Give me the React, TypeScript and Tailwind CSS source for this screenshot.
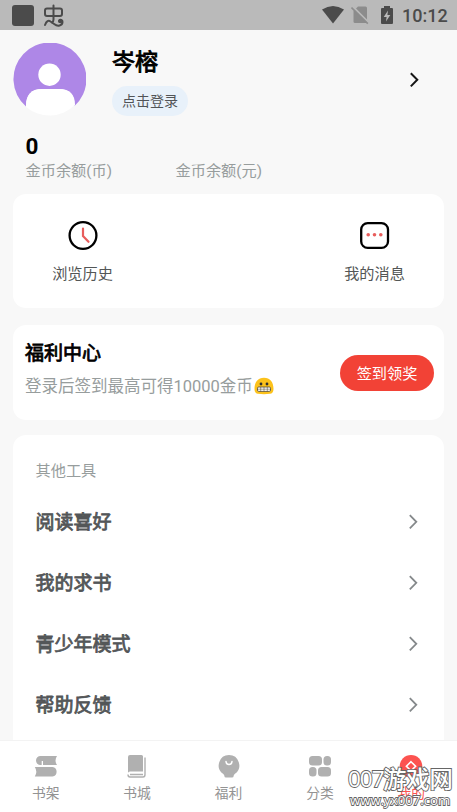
import React from 'react';

const Chevron = ({ className }: { className: string }) => (
  <svg width="20" height="20" viewBox="0 0 20 20" fill="none" stroke="currentColor" className={className}>
    <path d="M6.8 3.2 L13.3 9.8 L6.8 16.4" />
  </svg>
);

function StatusBar() {
  return (
    <header className="flex h-[30px] shrink-0 items-center bg-[#bababa] text-[#4b4b4b]">
      <div className="ml-3 h-[21px] w-[22px] rounded-[3px] bg-[#4b4b4b]" />
      <svg className="ml-[8px]" width="22" height="24" viewBox="0 0 22 24" fill="none" stroke="currentColor" strokeWidth="2" strokeLinecap="round">
        <rect x="3" y="5.5" width="17" height="7.5" rx="2" />
        <path d="M11.5 2.6 V16.5 Q11.5 18.5 10 19.5" />
        <path d="M3 22 C4.5 18 6.5 17 8.5 18.5 L12.5 21.3 C15.5 23.7 20.5 22.8 20.5 19 C20.5 15.8 16 16.5 17.3 18.8" />
        <circle cx="18.4" cy="18.3" r="1" />
      </svg>
      <svg className="ml-auto" width="24" height="20" viewBox="0 0 24 20" fill="currentColor">
        <path d="M1 4.6 Q12 -2.8 23 4.6 L12 18.4 Z" />
      </svg>
      <svg className="ml-[6px]" width="18" height="20" viewBox="0 0 18 20">
        <path d="M7 1.5 H14.5 Q16 1.5 16 3 V18 H4 Q2.5 18 2.5 16.5 V6 Z" fill="#8c8c8c" />
        <path d="M1.6 1.5 L18 18" stroke="#bababa" strokeWidth="2" />
        <path d="M0.5 2.5 L16.8 18.6" stroke="#8c8c8c" strokeWidth="1.6" />
      </svg>
      <svg className="ml-[11px]" width="14" height="20" viewBox="0 0 14 20">
        <path d="M4 1 H10 V3 H12 Q13 3 13 4 V18 Q13 19 12 19 H2 Q1 19 1 18 V4 Q1 3 2 3 H4 Z" fill="currentColor" />
        <path d="M8 5.5 L3.7 12 H6.6 L6 16.5 L10.3 10 H7.4 Z" fill="#bababa" />
      </svg>
      <span className="mr-[10px] ml-[8px] w-[45px] pt-px font-['Roboto',sans-serif] text-[18px] leading-[29px] font-medium whitespace-nowrap">10:12</span>
    </header>
  );
}

function Profile() {
  return (
    <section className="flex h-[104px] shrink-0 items-start pl-[13px]">
      <svg className="mt-[13px]" width="73" height="73" viewBox="0 0 73 73">
        <path d="M13 63.5 A36.5 36.5 0 1 1 61.5 63 Q62 46 46 46 H29 Q13 46 13 63.5 Z" fill="#ae87e7" />
        <circle cx="36.5" cy="31.7" r="11.2" fill="#fff" />
        <path d="M13 62.5 Q13 46 29 46 H46 Q62 46 62 62 A36.5 36.5 0 0 1 13 64 Z" fill="#fff" />
      </svg>
      <div className="ml-[26px] flex flex-col items-start pt-[17px]">
        <h1 className="text-[22.9px] leading-8 font-normal text-black [-webkit-text-stroke:0.9px_black]">岑榕</h1>
        <button className="mt-[7px] h-[30px] w-[76px] rounded-full bg-[#e8f1fa] pt-px text-[14px] leading-[29px] text-[#515457]">点击登录</button>
      </div>
      <Chevron className="mt-[40px] mr-[33px] ml-auto stroke-2 text-[#151515]" />
    </section>
  );
}

function Balance() {
  return (
    <section className="flex h-[60px] shrink-0 pl-[25.5px] text-[15.2px] leading-5 text-[#979d9d]">
      <div className="w-[150px]">
        <div className="h-[27px] font-['Roboto',sans-serif] text-[22.5px] leading-6 font-bold text-black">0</div>
        金币余额(币)
      </div>
      <div className="pt-[27px]">金币余额(元)</div>
    </section>
  );
}

const tools = ['阅读喜好', '我的求书', '青少年模式', '帮助反馈'];

const Shelf = () => (
  <svg width="28" height="28" viewBox="0 0 28 28" fill="#b0b0b0">
    <path d="M8.5 3 H25 Q22 7.5 25 12 H11 V8 H9.7 V12 H8.5 A4.5 4.5 0 0 1 8.5 3 Z" />
    <path d="M2.8 14 H20.5 A4.8 4.8 0 0 1 20.5 23.5 H2.8 Q5.8 18.7 2.8 14 Z" />
  </svg>
);
const Book = () => (
  <svg width="28" height="28" viewBox="0 0 28 28">
    <path d="M7 2 H18.5 Q20 2 20 3.5 V18.5 H7 Q5 18.5 5 20 V4 Q5 2 7 2 Z" fill="#b0b0b0" />
    <path d="M22 4.5 V21.5 Q22 24 20 24 H7 Q5 24 5 21.5 M7 21.5 H20" fill="none" stroke="#b0b0b0" strokeWidth="1.4" />
  </svg>
);
const Welfare = () => (
  <svg width="28" height="28" viewBox="0 0 28 28">
    <path d="M14 2 A10.4 10.4 0 0 1 20 20.8 Q18.5 22 18.5 23.5 Q18.5 24.5 17 24.5 H11 Q9.5 24.5 9.5 23.5 Q9.5 22 8 20.8 A10.4 10.4 0 0 1 14 2 Z" fill="#b0b0b0" />
    <path d="M11 8.5 Q11.3 11.5 14 11.5 Q16.7 11.5 17 8.5" fill="none" stroke="white" strokeWidth="1.5" strokeLinecap="round" />
  </svg>
);
const Category = () => (
  <svg width="28" height="28" viewBox="0 0 28 28" fill="#b0b0b0">
    <rect x="3" y="3" width="13" height="9.5" rx="3.5" />
    <rect x="17.5" y="3" width="7.5" height="9.5" rx="3.5" />
    <rect x="3" y="14" width="7.5" height="9.5" rx="3.5" />
    <rect x="12" y="14" width="13" height="9.5" rx="3.5" />
  </svg>
);
const Mine = () => (
  <svg width="28" height="28" viewBox="0 0 28 28">
    <circle cx="14" cy="13.3" r="11.3" fill="#fc5350" />
    <path d="M14 8.7 L18.6 13.3 L14 17.9 L9.4 13.3 Z" fill="none" stroke="white" strokeWidth="1.6" />
  </svg>
);

const tabs = [
  { label: '书架', Icon: Shelf, color: 'text-[#939393]' },
  { label: '书城', Icon: Book, color: 'text-[#939393]' },
  { label: '福利', Icon: Welfare, color: 'text-[#939393]' },
  { label: '分类', Icon: Category, color: 'text-[#939393]' },
  { label: '我的', Icon: Mine, color: 'text-[#fc5350]' },
];

export default function App() {
  return (
    <div className="relative flex h-[812px] w-[457px] flex-col overflow-hidden bg-[#f8f8f8] font-['Roboto','Noto_Sans_CJK_SC',sans-serif] whitespace-nowrap">
      <StatusBar />
      <Profile />
      <Balance />
      <main className="flex min-h-0 flex-1 flex-col overflow-hidden px-[13px]">
        <section className="flex h-[114px] shrink-0 justify-between rounded-[13px] bg-white px-[39px] pt-[26px] text-[15.2px] leading-5 text-[#535656]">
          <div className="flex w-[61px] flex-col items-center">
            <svg width="30" height="31" viewBox="0 0 30 31" fill="none">
              <circle cx="15" cy="15.5" r="13.4" stroke="black" strokeWidth="2.3" />
              <path d="M15 8.5 V16 L20.5 21.8" stroke="#e85d5c" strokeWidth="2.2" strokeLinecap="round" />
            </svg>
            <span className="mt-[13px]">浏览历史</span>
          </div>
          <div className="flex w-[61px] flex-col items-center">
            <svg width="30" height="31" viewBox="0 0 30 31" fill="none">
              <rect x="1.2" y="3.1" width="26.8" height="24.8" rx="6.5" stroke="black" strokeWidth="2.3" />
              <g fill="#e85d5c">
                <circle cx="8.2" cy="14.8" r="1.8" />
                <circle cx="14.5" cy="14.8" r="1.8" />
                <circle cx="20.8" cy="14.8" r="1.8" />
              </g>
            </svg>
            <span className="mt-[13px]">我的消息</span>
          </div>
        </section>

        <section className="mt-[17px] flex h-[95px] shrink-0 items-center justify-between rounded-[13px] bg-white pr-[10px] pl-[12px]">
          <div className="pb-[7px]">
            <h2 className="text-[19px] leading-7 font-normal text-black [-webkit-text-stroke:0.8px_black]">福利中心</h2>
            <p className="mt-[7px] flex items-center text-[16.5px] leading-6 text-[#979d9d]">
              登录后签到最高可得10000金币
              <svg className="mb-px ml-px" width="20" height="18" viewBox="0 0 20 18">
                <path d="M0.5 12 C0.5 5 4 0.8 10 0.8 S19.5 5 19.5 12 C19.5 15 18 16.6 16 16.8 Q10 17.5 4 16.8 C2 16.6 0.5 15 0.5 12 Z" fill="#fcc21b" />
                <circle cx="7" cy="7" r="1.4" fill="#2f2f2f" />
                <circle cx="13" cy="7" r="1.4" fill="#2f2f2f" />
                <rect x="3.5" y="10" width="13" height="4.4" rx="1.2" fill="white" stroke="#4d4430" strokeWidth="0.8" />
                <path d="M3.5 12.2 H16.5 M6.7 10 V14.4 M10 10 V14.4 M13.3 10 V14.4" stroke="#4d4430" strokeWidth="0.5" />
              </svg>
            </p>
          </div>
          <button className="h-[36px] w-[94px] rounded-full bg-[#f24236] pt-[3px] text-[15.2px] text-white">签到领奖</button>
        </section>

        <section className="mt-[15px] shrink-0 rounded-t-[13px] bg-white pt-[26px] pr-[21px] pb-2 pl-[22.5px]">
          <h3 className="h-[30px] text-[15.2px] leading-5 text-[#979d9d]">其他工具</h3>
          {tools.map((tool) => (
            <div key={tool} className="flex h-[61px] items-center justify-between text-[19px] leading-7 text-[#535658]">
              <span className="pt-[2px] [-webkit-text-stroke:0.8px_#535658]">{tool}</span>
              <Chevron className="stroke-[1.8] text-[#85898b]" />
            </div>
          ))}
        </section>
      </main>

      <nav className="flex h-[72px] shrink-0 border-t border-[#f3f3f3] bg-white pt-[12px]">
        {tabs.map(({ label, Icon, color }) => (
          <div key={label} className="flex flex-1 flex-col items-center">
            <Icon />
            <span className={`mt-[2px] text-[13.8px] leading-5 ${color}`}>{label}</span>
          </div>
        ))}
      </nav>

      <div className="absolute top-[765px] left-[348px] font-['Open_Sans','Noto_Sans_CJK_SC',sans-serif] text-white [-webkit-text-stroke:1.8px_#666] [paint-order:stroke_fill]">
        <div className="flex h-[28px] items-center leading-[28px]">
          <span className="w-[35px] text-[22.5px] font-medium tracking-[-1px]">007</span>
          <span className="text-[23.3px] font-medium">游戏网</span>
        </div>
        <div className="ml-[2px] text-[13.2px] leading-[14px] font-medium">www.yx007.com</div>
      </div>
    </div>
  );
}
